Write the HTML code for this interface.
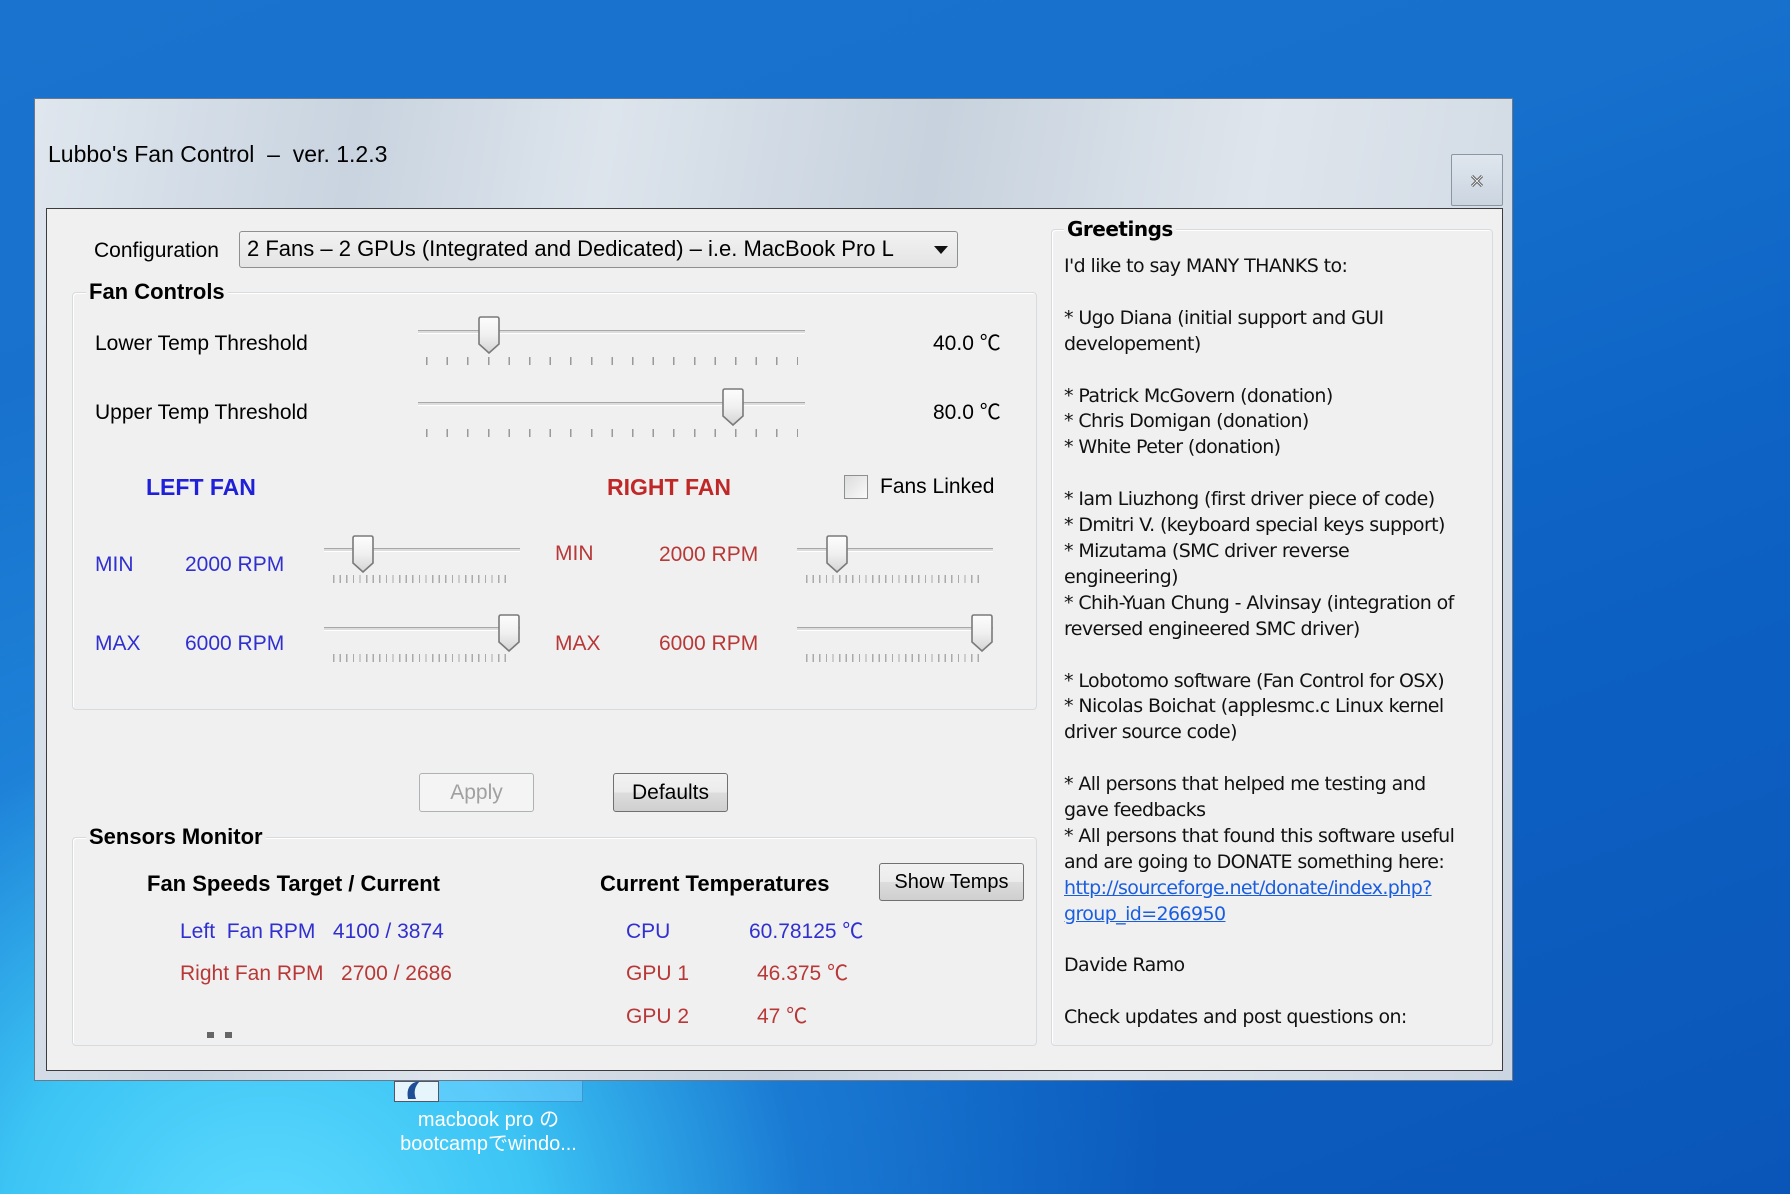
<!DOCTYPE html>
<html><head><meta charset="utf-8"><style>
*{margin:0;padding:0;box-sizing:border-box}
body{width:1790px;height:1194px;overflow:hidden;position:relative;font-family:"Liberation Sans","Noto Sans CJK JP",sans-serif;
background:linear-gradient(160deg,#1a74cf 0%,#1670cc 35%,#0d62c4 60%,#0a56b8 100%);}
.bl{position:absolute;left:0;top:0;width:1790px;height:1194px;background:radial-gradient(circle 900px at 15% 105%,#5fdcff 0%,#3cc4f4 30%,rgba(40,150,230,0.5) 60%,rgba(40,150,230,0) 100%);}
.t{position:absolute;white-space:nowrap;line-height:24px;font-size:21px;color:#000}
.win{position:absolute;left:34px;top:98px;width:1479px;height:983px;border:1px solid #6a7a8a;
background:linear-gradient(100deg,#dfe6ee 0%,#c9d4e0 20%,#dde4ec 35%,#c7d2de 55%,#dfe5ec 75%,#ccd6e2 100%)}
.client{position:absolute;left:46px;top:208px;width:1457px;height:863px;background:#f0f0f0;border:1px solid #3c3c3c}
.grp{position:absolute;border:1px solid #d6dbe0;border-radius:4px;box-shadow:1px 1px 0 #fff inset}
.gt{position:absolute;background:#f0f0f0;font-weight:bold;font-size:22px;padding:0 3px;line-height:24px;white-space:nowrap}
.track{position:absolute;height:4px;border-top:1px solid #a8a8a8;border-bottom:1px solid #fff;background:#dcdcdc}
.ticks{position:absolute;height:8px}
.btn{position:absolute;border:1px solid #707070;border-radius:3px;background:linear-gradient(#f2f2f2,#ebebeb 50%,#dddddd 50%,#cfcfcf);font-size:21px;text-align:center}
.g{line-height:25.9px;position:absolute;left:1064px;top:254px;white-space:pre;color:#111;font-family:"DejaVu Sans","Liberation Sans",sans-serif;letter-spacing:-0.6px;font-size:19px}
</style></head><body>
<div class="bl"></div>
<div class="win"></div>
<div class="t" style="left:48px;top:142px;font-size:23px;">Lubbo's Fan Control &nbsp;–&nbsp; ver. 1.2.3</div>
<div style="position:absolute;left:1451px;top:154px;width:52px;height:52px;border:1px solid #8a96a4;border-radius:2px;background:linear-gradient(#dfe6ee,#cbd5e0)">
<svg width="50" height="50" style="position:absolute;left:0;top:0"><path d="M20 21 L30 31 M30 21 L20 31" stroke="#555" stroke-width="3"/><path d="M20 21 L30 31 M30 21 L20 31" stroke="#eee" stroke-width="1"/></svg></div>
<div class="client"></div>

<div class="t" style="left:94px;top:239px">Configuration</div>
<div style="position:absolute;left:239px;top:231px;width:719px;height:37px;border:1px solid #8e8f8f;border-radius:3px;background:linear-gradient(#f2f2f2,#e4e4e4)"></div>
<div class="t" style="left:247px;top:237px;font-size:22px">2 Fans – 2 GPUs (Integrated and Dedicated) – i.e. MacBook Pro L</div>
<svg style="position:absolute;left:933px;top:245px" width="16" height="10"><path d="M1 1 L15 1 L8 9Z" fill="#111"/></svg>

<div class="grp" style="left:72px;top:292px;width:965px;height:418px"></div>
<div class="gt" style="left:86px;top:280px">Fan Controls</div>
<div class="t" style="left:95px;top:332px">Lower Temp Threshold</div>
<div class="t" style="left:95px;top:401px">Upper Temp Threshold</div>
<div class="t" style="left:933px;top:332px">40.0 ℃</div>
<div class="t" style="left:933px;top:401px">80.0 ℃</div>

<div class="track" style="left:418px;top:330px;width:387px"></div>
<div class="ticks" style="left:426px;top:357px;width:372px;background:repeating-linear-gradient(90deg,#999 0 1.5px,transparent 1.5px 20.6px)"></div>
<div class="track" style="left:418px;top:402px;width:387px"></div>
<div class="ticks" style="left:426px;top:429px;width:372px;background:repeating-linear-gradient(90deg,#999 0 1.5px,transparent 1.5px 20.6px)"></div>

<div class="t" style="left:146px;top:475px;color:#2020d8;font-weight:bold;font-size:23px">LEFT FAN</div>
<div class="t" style="left:607px;top:475px;color:#c02828;font-weight:bold;font-size:23px">RIGHT FAN</div>
<div style="position:absolute;left:844px;top:475px;width:24px;height:24px;border:1px solid #8e8f8f;background:linear-gradient(135deg,#dcdcdc,#fafafa)"></div>
<div class="t" style="left:880px;top:475px">Fans Linked</div>

<div class="t" style="left:95px;top:553px;color:#3030d0">MIN</div>
<div class="t" style="left:185px;top:553px;color:#3030d0">2000 RPM</div>
<div class="t" style="left:95px;top:632px;color:#3030d0">MAX</div>
<div class="t" style="left:185px;top:632px;color:#3030d0">6000 RPM</div>
<div class="t" style="left:555px;top:542px;color:#b83838">MIN</div>
<div class="t" style="left:659px;top:543px;color:#b83838">2000 RPM</div>
<div class="t" style="left:555px;top:632px;color:#b83838">MAX</div>
<div class="t" style="left:659px;top:632px;color:#b83838">6000 RPM</div>

<div class="track" style="left:324px;top:548px;width:196px"></div>
<div class="ticks" style="left:333px;top:575px;width:178px;background:repeating-linear-gradient(90deg,#aaa 0 1.3px,transparent 1.3px 6.6px)"></div>
<div class="track" style="left:324px;top:627px;width:196px"></div>
<div class="ticks" style="left:333px;top:654px;width:178px;background:repeating-linear-gradient(90deg,#aaa 0 1.3px,transparent 1.3px 6.6px)"></div>
<div class="track" style="left:797px;top:548px;width:196px"></div>
<div class="ticks" style="left:806px;top:575px;width:178px;background:repeating-linear-gradient(90deg,#aaa 0 1.3px,transparent 1.3px 6.6px)"></div>
<div class="track" style="left:797px;top:627px;width:196px"></div>
<div class="ticks" style="left:806px;top:654px;width:178px;background:repeating-linear-gradient(90deg,#aaa 0 1.3px,transparent 1.3px 6.6px)"></div>

<svg width="1790" height="1194" style="position:absolute;left:0;top:0">
<defs><linearGradient id="th" x1="0" y1="0" x2="0" y2="1"><stop offset="0" stop-color="#fdfdfd"/><stop offset="0.5" stop-color="#f0f0f0"/><stop offset="1" stop-color="#d4d4d4"/></linearGradient>
<symbol id="thumb" viewBox="0 0 22 38"><path d="M3 1 H19 Q21 1 21 3 V28 L11 37 L1 28 V3 Q1 1 3 1Z" fill="url(#th)" stroke="#7a7a7a" stroke-width="1.6"/></symbol></defs>
<use href="#thumb" x="478" y="316" width="22" height="38"/>
<use href="#thumb" x="722" y="388" width="22" height="38"/>
<use href="#thumb" x="352" y="535" width="22" height="38"/>
<use href="#thumb" x="498" y="614" width="22" height="38"/>
<use href="#thumb" x="826" y="535" width="22" height="38"/>
<use href="#thumb" x="971" y="614" width="22" height="38"/>
</svg>

<div class="btn" style="left:419px;top:773px;width:115px;height:39px;border-color:#adb2b5;background:#f4f4f4;color:#a0a0a0;line-height:37px">Apply</div>
<div class="btn" style="left:613px;top:773px;width:115px;height:39px;line-height:37px">Defaults</div>

<div class="grp" style="left:72px;top:837px;width:965px;height:209px"></div>
<div class="gt" style="left:86px;top:825px">Sensors Monitor</div>
<div class="t" style="left:147px;top:872px;font-weight:bold;font-size:22px">Fan Speeds Target / Current</div>
<div class="t" style="left:600px;top:872px;font-weight:bold;font-size:22px">Current Temperatures</div>
<div class="btn" style="left:879px;top:863px;width:145px;height:38px;line-height:36px;font-size:20px">Show Temps</div>
<div class="t" style="left:180px;top:920px;color:#3030d0">Left &nbsp;Fan RPM &nbsp;&nbsp;4100 / 3874</div>
<div class="t" style="left:180px;top:962px;color:#b83838">Right Fan RPM &nbsp;&nbsp;2700 / 2686</div>
<div class="t" style="left:626px;top:920px;color:#3030d0">CPU</div>
<div class="t" style="left:749px;top:920px;color:#3030d0">60.78125 ℃</div>
<div class="t" style="left:626px;top:962px;color:#b83838">GPU 1</div>
<div class="t" style="left:757px;top:962px;color:#b83838">46.375 ℃</div>
<div class="t" style="left:626px;top:1005px;color:#b83838">GPU 2</div>
<div class="t" style="left:757px;top:1005px;color:#b83838">47 ℃</div>
<div style="position:absolute;left:207px;top:1032px;width:7px;height:6px;background:#666"></div>
<div style="position:absolute;left:225px;top:1032px;width:7px;height:6px;background:#666"></div>

<div class="grp" style="left:1051px;top:229px;width:442px;height:817px"></div>
<div class="gt" style="left:1064px;top:217px;font-family:'DejaVu Sans',sans-serif;font-size:20px;letter-spacing:-0.5px">Greetings</div>
<div class="g">I'd like to say MANY THANKS to:

* Ugo Diana (initial support and GUI
developement)

* Patrick McGovern (donation)
* Chris Domigan (donation)
* White Peter (donation)

* Iam Liuzhong (first driver piece of code)
* Dmitri V. (keyboard special keys support)
* Mizutama (SMC driver reverse
engineering)
* Chih-Yuan Chung - Alvinsay (integration of
reversed engineered SMC driver)

* Lobotomo software (Fan Control for OSX)
* Nicolas Boichat (applesmc.c Linux kernel
driver source code)

* All persons that helped me testing and
gave feedbacks
* All persons that found this software useful
and are going to DONATE something here:
<span style="color:#1a5ee0;text-decoration:underline">http://sourceforge.net/donate/index.php?</span>
<span style="color:#1a5ee0;text-decoration:underline">group_id=266950</span>

Davide Ramo

Check updates and post questions on:</div>

<div style="position:absolute;left:394px;top:1081px;width:189px;height:21px;background:rgba(120,210,255,.5);border:1px solid rgba(40,110,170,.5);border-top:none"></div>
<div style="position:absolute;left:394px;top:1081px;width:45px;height:21px;background:#e6f4fc;border:1px solid #556"></div>
<svg style="position:absolute;left:400px;top:1081px" width="30" height="20"><path d="M20 0 Q5 2 8 18 L16 18 Q12 8 20 0Z" fill="#1e4e96"/></svg>
<div class="t" style="left:394px;top:1108px;width:189px;text-align:center;color:#fff;font-size:20px">macbook pro の</div>
<div class="t" style="left:394px;top:1132px;width:189px;text-align:center;color:#fff;font-size:20px">bootcampでwindo...</div>
</body></html>
